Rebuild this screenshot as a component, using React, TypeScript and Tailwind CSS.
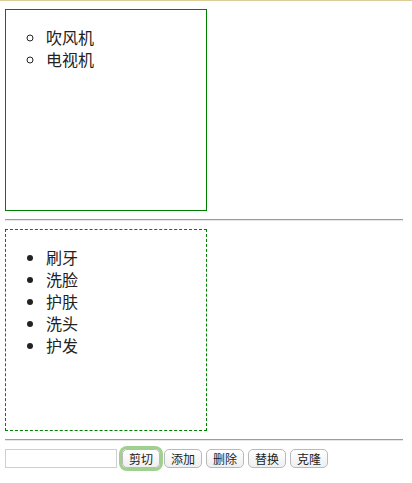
const cnFont = "font-['Noto_Sans_CJK_SC','Noto_Sans',sans-serif]"

const appliances = ['吹风机', '电视机']
const chores = ['刷牙', '洗脸', '护肤', '洗头', '护发']
const actions = ['剪切', '添加', '删除', '替换', '克隆']

function Divider() {
  return <div className="my-2 h-[2px] border-t border-b border-t-[#9c9c9c] border-b-[#e6e6e6]" />
}

export default function App() {
  return (
    <div className={`min-h-[483px] w-[412px] border-t border-[#dccc98] bg-white pl-[5px] pr-[9px] pt-2 text-black ${cnFont}`}>
      <div className="h-[202px] w-[202px] border border-[#008000]">
        <ul className="mt-4 list-[circle] pl-10 text-[16px] leading-[22px] text-[#222]">
          {appliances.map((item) => (
            <li key={item}>{item}</li>
          ))}
        </ul>
      </div>
      <Divider />
      <div className="h-[202px] w-[202px] border border-dashed border-[#008000]">
        <ul className="mt-4 list-disc pl-10 text-[16px] leading-[22px] text-[#222]">
          {chores.map((item) => (
            <li key={item}>{item}</li>
          ))}
        </ul>
      </div>
      <Divider />
      <div className="flex items-center gap-1">
        <input className="h-[19px] w-[112px] border border-[#cfcfcf] bg-white px-1 text-[12px] outline-none" />
        {actions.map((label, i) => (
          <button
            key={label}
            className={`flex h-[19px] items-center rounded-[5px] border border-[#b9b9b9] bg-gradient-to-b from-white to-[#efefef] px-[6px] text-[12px] leading-none text-[#222] ${i === 0 ? 'ml-[1px] ring-[3px] ring-[#9fd08f]' : ''}`}
          >
            {label}
          </button>
        ))}
      </div>
    </div>
  )
}
